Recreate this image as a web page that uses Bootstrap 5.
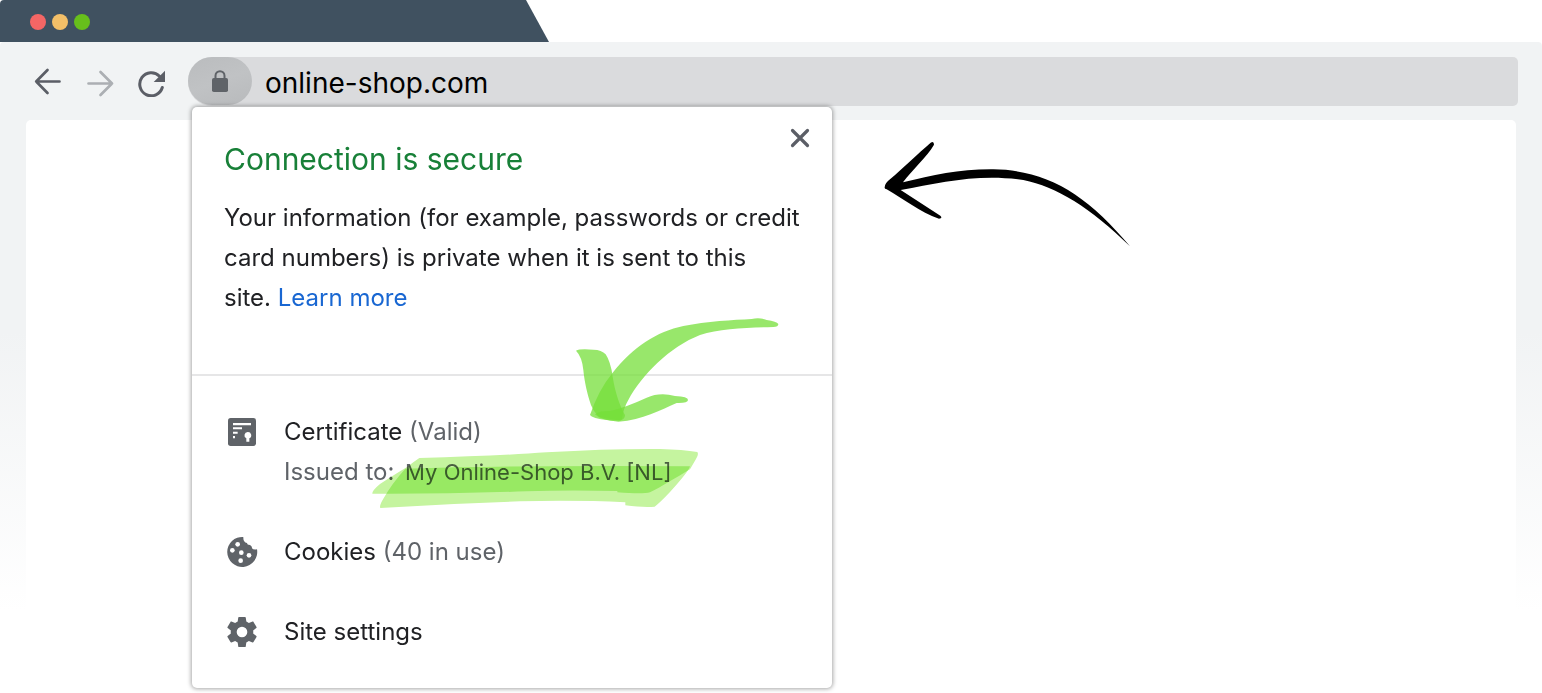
<!DOCTYPE html>
<html lang="en">
<head>
<meta charset="utf-8">
<meta name="viewport" content="width=device-width, initial-scale=1">
<title>Connection is secure</title>
<link href="https://cdn.jsdelivr.net/npm/bootstrap@5.3.0/dist/css/bootstrap.min.css" rel="stylesheet">
<style>
  body { font-family: Inter, "Liberation Sans", sans-serif; font-size: 24px; line-height: 40px; color: #202124; background: #fff; }
  .tab-strip { width: 549px; height: 42px; padding: 2px 0 0 30px; background: #405160; border-top-left-radius: 4px; clip-path: polygon(0 0, 526px 0, 100% 100%, 0 100%); }
  .lights { gap: 6px; }
  .light { width: 16px; height: 16px; }
  .light-red { background: #f46665; }
  .light-amber { background: #f3bf68; }
  .light-green { background: #67bf1b; }
  .browser-frame { background: linear-gradient(#f1f3f4 0, #f1f3f4 290px, #fff 570px); border-radius: 4px 4px 0 0; }
  .toolbar { padding: 15px 24px 14px 22px; }
  .tool-btn { width: 52px; height: 48px; color: #5b5e66; }
  .tool-btn.inactive { color: #acafb3; }
  .tool-btn:disabled { opacity: 1; border: 0; }
  .address { height: 49px; margin-left: 10px; background: #dadbdd; border-radius: 24px 5px 5px 24px; }
  .lock-btn { width: 64px; height: 48px; background: linear-gradient(160deg, #babcbe, #c0c2c4 50%, #b8babc); color: #5f6368; }
  .address-input { font-size: 28px; color: #000; padding: 2px 12px 0 13px; }
  .viewport { margin: 0 26px; background: #fff; border-radius: 5px 5px 0 0; }
  .site-info { top: 50px; left: 4px; width: 640px; border-radius: 5px; box-shadow: 0 0 4px 1px rgba(0, 0, 0, .35); }
  .info-head { padding: 32px 32px 56px; border-bottom: 2px solid #e6e6e7; }
  .info-title { font-size: 30px; line-height: 40px; font-weight: 400; color: #188038; margin-bottom: 19px; }
  .info-close { top: 11px; right: 12px; width: 40px; height: 40px; color: #5b5e66; }
  .info-head a { color: #1967d2; }
  .info-list { padding: 36px 32px; gap: 40px; }
  .info-icon { width: 36px; margin-right: 24px; height: 40px; color: #5f6368; }
  .muted { color: #5f6368; }
  .holder { font-size: 22px; margin-left: 4px; }
  .marker { top: -12px; left: 76px; mix-blend-mode: multiply; }
  .marker path { mix-blend-mode: multiply; }
  .check-arrow { top: 193px; left: 368px; }
  .ink-arrow { top: 0; left: 834px; }
  .marker, .check-arrow, .ink-arrow { pointer-events: none; }
</style>
</head>
<body class="d-flex flex-column min-vh-100">
<header class="tab-strip d-flex align-items-center">
  <div class="lights d-flex">
    <span class="light light-red rounded-circle"></span>
    <span class="light light-amber rounded-circle"></span>
    <span class="light light-green rounded-circle"></span>
  </div>
</header>
<div class="browser-frame flex-grow-1 d-flex flex-column">
  <div class="toolbar d-flex align-items-center">
    <button type="button" class="tool-btn btn border-0 p-0 d-flex align-items-center justify-content-center" aria-label="Back">
      <svg width="30" height="30" viewBox="0 0 30 30" fill="none" stroke="currentColor" stroke-width="2.7" stroke-linecap="round" stroke-linejoin="round"><path d="M26.500 14.500H3.200M14.500 3 3.200 14.500 14.500 26"/></svg>
    </button>
    <button type="button" disabled class="tool-btn inactive btn border-0 p-0 d-flex align-items-center justify-content-center" aria-label="Forward">
      <svg width="30" height="30" viewBox="0 0 30 30" fill="none" stroke="currentColor" stroke-width="2.7" stroke-linecap="round" stroke-linejoin="round"><path d="M3.500 16.500H27M15.500 5 27 16.500 15.500 28"/></svg>
    </button>
    <button type="button" class="tool-btn btn border-0 p-0 d-flex align-items-center justify-content-center" aria-label="Reload">
      <svg width="30" height="30" viewBox="0 0 30 30" fill="none"><path d="M25.300 20.500A11.500 11.500 0 1 1 22.500 9.200" stroke="currentColor" stroke-width="3" stroke-linecap="round"/><path d="M28 3.700V15H16.700z" fill="currentColor"/></svg>
    </button>
    <div class="address position-relative flex-grow-1 d-flex align-items-start">
      <button type="button" class="lock-btn btn border-0 p-0 rounded-pill flex-shrink-0 d-flex align-items-center justify-content-center" aria-label="View site information">
        <svg width="18" height="22" viewBox="0 0 18 22"><path d="M4.500 9V5.700a4.500 4.500 0 0 1 9 0V9" fill="none" stroke="currentColor" stroke-width="2"/><rect x="1" y="8" width="16" height="14" rx="1.800" fill="currentColor"/></svg>
      </button>
      <input type="text" class="address-input flex-grow-1 h-100 border-0 bg-transparent" value="online-shop.com" aria-label="Address">
      <section class="site-info position-absolute bg-white z-3" aria-labelledby="info-title">
        <div class="info-head">
          <h1 class="info-title" id="info-title">Connection is secure</h1>
          <p class="mb-0">Your information (for example, passwords or credit card numbers) is private when it is sent to this site. <a href="#" class="text-decoration-none">Learn more</a></p>
          <button type="button" class="info-close btn border-0 p-0 position-absolute d-flex align-items-center justify-content-center" aria-label="Close">
            <svg width="20" height="20" viewBox="0 0 20 20" fill="none" stroke="currentColor" stroke-width="3.200" stroke-linecap="round"><path d="m2.500 2.500 15 15m0-15-15 15"/></svg>
          </button>
        </div>
        <div class="info-list d-flex flex-column">
          <div class="d-flex">
            <span class="info-icon d-flex align-items-center"><svg width="36" height="36" viewBox="0 0 108 108"><rect x="12" y="12" width="84" height="84" rx="8" fill="currentColor"/><path fill="#fff" d="M27 27h54v7H27zM27 40h27v6H27zM27 53h14v6H27zM27 66h6v7h-6zM71 54a10 10 0 0 1 5 19v10h-9V73a10 10 0 0 1 4-19z"/></svg></span>
            <div>
              <div>Certificate <span class="muted">(Valid)</span></div>
              <div class="muted position-relative">Issued to: <span class="holder">My Online-Shop B.V. [NL]</span>
                <svg class="marker position-absolute" width="350" height="80" viewBox="0 0 1050 240" fill="#c5f49f" aria-hidden="true"><path d="M37 161Q36 152 60 132Q110 100 140 82Q160 66 178 54Q420 47 560 37Q740 26 900 27Q970 29 1012 36Q1017 44 1008 57L990 88C950 112 905 140 870 157Q850 163 772 157V153Q620 149 500 154Q260 162 37 161z"/><path d="M61 204Q57 197 70 176Q96 130 136 86Q520 75 990 79Q985 96 930 156Q900 188 884 200Q850 203 796 196V187Q650 180 480 184Q270 190 61 204z"/></svg>
              </div>
            </div>
          </div>
          <div class="d-flex">
            <span class="info-icon d-flex align-items-center"><svg width="36" height="36" viewBox="0 0 108 108"><path fill="currentColor" d="M58 9A45 45 0 1 0 99 46Q88 48 84 43Q84 34 75 32Q70 34 69 27Q57 25 58 9z"/><g fill="#fff"><circle cx="41" cy="31" r="7"/><circle cx="25" cy="49" r="7"/><circle cx="52" cy="56" r="7"/><circle cx="75" cy="64" r="7"/><circle cx="50" cy="80" r="7"/></g></svg></span>
            <div>Cookies <span class="muted">(40 in use)</span></div>
          </div>
          <div class="d-flex">
            <span class="info-icon d-flex align-items-center"><svg width="36" height="36" viewBox="0.500 0.500 23 23"><path fill="currentColor" d="M19.140 12.940c.04-.3.06-.61.06-.94 0-.32-.02-.64-.07-.94l2.030-1.580c.18-.14.23-.41.12-.61l-1.920-3.320c-.12-.22-.37-.29-.59-.22l-2.390.96c-.5-.38-1.030-.7-1.620-.94l-.36-2.540c-.04-.24-.24-.41-.48-.41h-3.840c-.24 0-.43.17-.47.41l-.36 2.540c-.59.24-1.130.57-1.620.94l-2.390-.96c-.22-.08-.47 0-.59.22L2.740 8.870c-.12.21-.08.47.12.61l2.030 1.580c-.05.3-.09.63-.09.94s.02.64.07.94l-2.030 1.580c-.18.14-.23.41-.12.61l1.920 3.320c.12.22.37.29.59.22l2.390-.96c.5.38 1.030.7 1.620.94l.36 2.540c.05.24.24.41.48.41h3.840c.24 0 .44-.17.47-.41l.36-2.540c.59-.24 1.130-.56 1.620-.94l2.390.96c.22.08.47 0 .59-.22l1.920-3.320c.12-.22.07-.47-.12-.61l-2.010-1.580zM12 15.400a3.400 3.400 0 1 1 0-6.800 3.400 3.400 0 0 1 0 6.800z"/></svg></span>
            <div>Site settings</div>
          </div>
        </div>
        <svg class="check-arrow position-absolute" width="240" height="140" viewBox="0 0 720 420" fill="#76df3a" aria-hidden="true"><path opacity=".75" d="M90 345Q115 270 158 218C220 140 290 95 370 78C440 64 520 60 575 57Q600 52 620 60Q650 64 655 72Q655 81 640 81C560 83 480 85 420 105C330 140 245 225 205 300Q190 325 186 357Q180 363 145 361Q95 355 90 345z"/><path opacity=".75" d="M48 152Q60 145 100 149Q125 149 137 163Q152 185 158 230C165 275 178 315 195 345Q195 358 180 362L120 352Q97 335 88 300C78 265 73 240 70 210Q66 170 48 152z"/><path opacity=".75" d="M105 343Q120 331 150 333Q195 323 260 293Q300 275 345 288Q385 290 384 300Q384 310 350 309C300 330 250 360 175 365Q120 360 105 343z"/></svg>
      </section>
    </div>
  </div>
  <main class="viewport position-relative flex-grow-1">
    <svg class="ink-arrow position-absolute" width="300" height="140" viewBox="0 0 900 420" fill="#000" aria-hidden="true"><path d="M74 202Q74 190 90 178C130 143 175 100 212 68Q222 62 222 74C200 112 160 145 129 187C220 165 300 147 400 148C560 150 680 222 810 379C690 262 590 200 490 180C360 160 240 187 122 210L241 287Q249 295 237 296C180 277 130 236 80 208Q73 206 74 202z"/></svg>
  </main>
</div>
<script src="https://cdn.jsdelivr.net/npm/bootstrap@5.3.0/dist/js/bootstrap.bundle.min.js"></script>
</body>
</html>
